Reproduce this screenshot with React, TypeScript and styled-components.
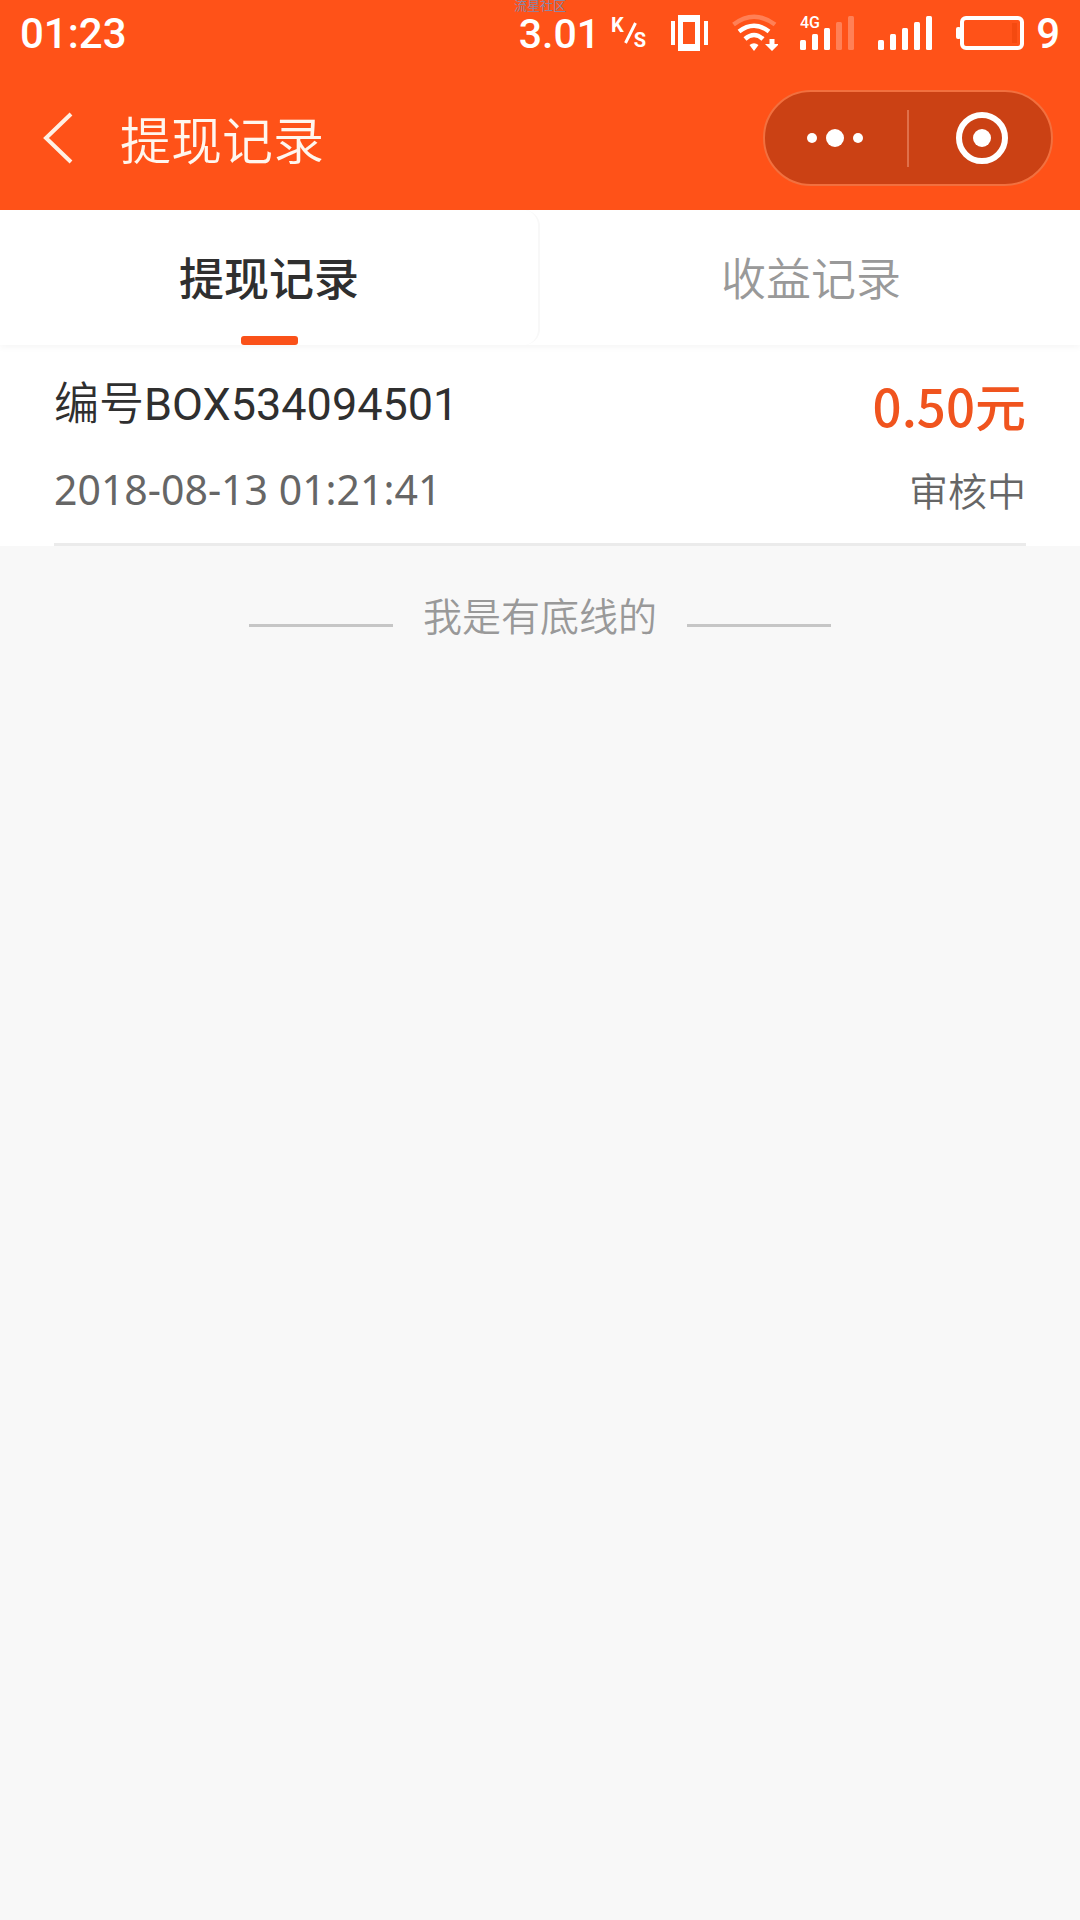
import React from 'react';
import styled, { createGlobalStyle } from 'styled-components';

const cjk = '"Noto Sans CJK SC", sans-serif';

const GlobalStyle = createGlobalStyle`
  *, *::before, *::after { box-sizing: border-box; }
  html, body { margin: 0; background: #f8f8f8; }
  body { font-family: Roboto, "Noto Sans CJK SC", sans-serif; color: #2f2f2f; }
  button { font: inherit; color: inherit; border: 0; padding: 0; background: none; cursor: pointer; }
  svg { display: block; flex: none; }
`;

const Page = styled.div`
  min-height: 100vh;
  background: #f8f8f8;
`;

const TopBar = styled.header`
  position: relative;
  background: #ff5218;
  color: #fff;
`;

const Watermark = styled.span`
  position: absolute;
  top: 0;
  left: 50%;
  transform: translateX(-50%);
  font-size: 13px;
  line-height: 12px;
  color: #8a86a6;
`;

const StatusBar = styled.div`
  display: flex;
  align-items: center;
  justify-content: space-between;
  height: 66px;
  padding: 0 20px;
  font-size: 42px;
  font-weight: 500;
  line-height: 64px;
`;

const Clock = styled.span`
  padding-top: 2px;
`;

const StatusIcons = styled.div`
  display: flex;
  align-items: center;
`;

const Speed = styled.span`
  display: flex;
  align-items: center;
  gap: 11px;
  margin-right: 24px;
  font-size: 41px;
`;

const SpeedUnit = styled.span`
  display: flex;
  align-items: center;
  height: 30px;
  font-size: 20px;
  font-weight: 700;
  line-height: 15px;
`;

const UnitPart = styled.span<{ $low?: boolean }>`
  align-self: ${p => (p.$low ? 'flex-end' : 'flex-start')};
  margin-left: ${p => (p.$low ? '-3px' : '0')};
`;

const IconSlot = styled.span<{ $gap: number }>`
  margin-right: ${p => p.$gap}px;
`;

const NavBar = styled.div`
  display: flex;
  align-items: center;
  height: 144px;
  padding: 0 27px 0 40px;
`;

const BackButton = styled.button`
  display: flex;
  margin-right: 46px;
`;

const Title = styled.h1`
  flex: 1;
  margin: 0;
  font-family: ${cjk};
  font-size: 51px;
  font-weight: 350;
  line-height: 72px;
  color: #fff6ee;
`;

const Capsule = styled.div`
  display: flex;
  align-items: center;
  width: 290px;
  height: 96px;
  border: 2px solid #f2703f;
  border-radius: 48px;
  background: #cb4114;
`;

const CapsuleButton = styled.button`
  display: flex;
  flex: 1;
  align-items: center;
  justify-content: center;
  height: 100%;
`;

const CapsuleDivider = styled.span`
  width: 2px;
  height: 57px;
  background: #e0704a;
`;

const Tabs = styled.nav`
  display: flex;
  height: 135px;
  background: #fff;
  box-shadow: 0 3px 6px #f7f7f7;
  position: relative;
  clip-path: inset(0 0 -12px 0);
`;

const Tab = styled.button<{ $active?: boolean }>`
  display: flex;
  flex: 1;
  flex-direction: column;
  align-items: center;
  justify-content: flex-end;
  margin-right: ${p => (p.$active ? '2px' : '0')};
  border-right: ${p => (p.$active ? '2px solid #f8f8f8' : '0')};
  border-radius: 16px;
  font-family: ${cjk};
  font-size: 45px;
  font-weight: ${p => (p.$active ? 500 : 350)};
  line-height: 66px;
  color: ${p => (p.$active ? '#2f2f2f' : '#999')};

  &::after {
    content: '';
    width: 57px;
    height: 9px;
    margin-top: 26px;
    border-radius: 3px;
    background: ${p => (p.$active ? '#fa5119' : 'transparent')};
  }
`;

const Records = styled.ul`
  margin: 0;
  padding: 0 54px;
  list-style: none;
  background: #fff;
`;

const Record = styled.li`
  display: flex;
  justify-content: space-between;
  height: 201px;
  padding-top: 26px;
  border-bottom: 3px solid #ebebeb;
`;

const Column = styled.div<{ $end?: boolean }>`
  display: flex;
  flex-direction: column;
  gap: 16px;
  align-items: ${p => (p.$end ? 'flex-end' : 'flex-start')};
`;

const RecordId = styled.span`
  font-size: 45px;
  font-weight: 350;
  line-height: 68px;
`;

const RecordCode = styled.span`
  font-weight: 400;
`;

const RecordTime = styled.time`
  font-family: "Noto Sans", "Noto Sans CJK SC", sans-serif;
  font-size: 41px;
  line-height: 68px;
  color: #666;
`;

const Amount = styled.span`
  font-family: ${cjk};
  font-size: 51px;
  font-weight: 500;
  line-height: 68px;
  color: #f0541e;
`;

const Status = styled.span`
  font-family: ${cjk};
  font-size: 39px;
  font-weight: 350;
  line-height: 68px;
  color: #666;
`;

const EndMark = styled.footer`
  display: flex;
  justify-content: center;
  gap: 30px;
  padding-top: 38px;
  font-family: ${cjk};
  font-size: 39px;
  font-weight: 350;
  line-height: 60px;
  color: #999;

  &::before,
  &::after {
    content: '';
    width: 144px;
    height: 3px;
    margin-top: 40px;
    background: #c6c6c6;
  }
`;

const Vibrate = () => (
  <svg width="38" height="36" viewBox="0 0 38 36" aria-hidden="true">
    <path fill="#fff" fillRule="evenodd" d="M8 0h22v36H8zM13 7v22h12V7z" />
    <path fill="#fff" d="M1 6h4v24H1zM34 6h4v24h-4z" />
  </svg>
);

const Wifi = () => (
  <svg width="46" height="38" viewBox="0 0 46 38" fill="none" stroke="#fff" strokeWidth="4.5" aria-hidden="true">
    <path opacity="0.27" d="M1.500 10.500Q22 -5 43 10.500" />
    <path d="M7 17.500Q22 6 37 17.500" />
    <path d="M13 25Q22 17 31 25" />
    <path fill="#fff" stroke="none" d="M17.500 31Q22 27.500 26.500 31L22 37zM37.500 25h5v5h4.500l-7 7-7-7h4.500z" />
  </svg>
);

const SignalBars = ({ level, label }: { level: number; label?: string }) => (
  <svg width="54" height="42" viewBox="0 -4 54 42" fill="#fff" aria-hidden="true">
    {[0, 1, 2, 3, 4].map(i => (
      <rect
        key={i}
        x={i * 12}
        y={24 - i * 6}
        width="6"
        height={10 + i * 6}
        rx="1.5"
        opacity={i < level ? 1 : 0.27}
      />
    ))}
    {label && (
      <text x="0" y="12" fontSize="16" fontWeight="500" fontFamily="Roboto, sans-serif">{label}</text>
    )}
  </svg>
);

const Battery = () => (
  <svg width="68" height="34" viewBox="0 0 68 34" aria-hidden="true">
    <rect x="6" y="2" width="60" height="30" rx="4" fill="none" stroke="#fff" strokeWidth="4" />
    <rect x="0" y="11" width="5" height="12" rx="2" fill="#fff" />
    <rect x="56" y="7" width="5" height="20" fill="#f44a10" />
  </svg>
);

const Slash = () => (
  <svg width="13" height="22" viewBox="0 0 13 22" aria-hidden="true">
    <path d="M1.500 21L11.500 1" stroke="#fff" strokeWidth="3" />
  </svg>
);

export default function App() {
  return (
    <Page>
      <GlobalStyle />
      <TopBar>
        <Watermark>流星社区</Watermark>
        <StatusBar>
          <Clock>01:23</Clock>
          <StatusIcons>
            <Speed>
              <Clock>3.01</Clock>
              <SpeedUnit>
                <UnitPart>K</UnitPart>
                <Slash />
                <UnitPart $low>S</UnitPart>
              </SpeedUnit>
            </Speed>
            <IconSlot $gap={24}><Vibrate /></IconSlot>
            <IconSlot $gap={22}><Wifi /></IconSlot>
            <IconSlot $gap={24}><SignalBars level={3} label="4G" /></IconSlot>
            <IconSlot $gap={24}><SignalBars level={5} /></IconSlot>
            <IconSlot $gap={12}><Battery /></IconSlot>
            <Clock>9</Clock>
          </StatusIcons>
        </StatusBar>
        <NavBar>
          <BackButton type="button" aria-label="返回">
            <svg width="34" height="52" viewBox="0 0 34 52" aria-hidden="true">
              <path d="M31 2L6 26L31 50" fill="none" stroke="#fff0e4" strokeWidth="4" />
            </svg>
          </BackButton>
          <Title>提现记录</Title>
          <Capsule>
            <CapsuleButton type="button" aria-label="更多">
              <svg width="58" height="20" viewBox="0 0 58 20" fill="#fff" aria-hidden="true">
                <circle cx="5" cy="10" r="5" />
                <circle cx="28" cy="10" r="9" />
                <circle cx="51" cy="10" r="5" />
              </svg>
            </CapsuleButton>
            <CapsuleDivider />
            <CapsuleButton type="button" aria-label="关闭">
              <svg width="56" height="52" viewBox="0 0 56 52" aria-hidden="true">
                <circle cx="30" cy="26" r="23" fill="none" stroke="#fff" strokeWidth="6" />
                <circle cx="30" cy="26" r="9" fill="#fff" />
              </svg>
            </CapsuleButton>
          </Capsule>
        </NavBar>
      </TopBar>
      <Tabs>
        <Tab type="button" $active>提现记录</Tab>
        <Tab type="button">收益记录</Tab>
      </Tabs>
      <main>
        <Records>
          <Record>
            <Column>
              <RecordId>编号<RecordCode>BOX534094501</RecordCode></RecordId>
              <RecordTime dateTime="2018-08-13T01:21:41">2018-08-13 01:21:41</RecordTime>
            </Column>
            <Column $end>
              <Amount>0.50元</Amount>
              <Status>审核中</Status>
            </Column>
          </Record>
        </Records>
        <EndMark>我是有底线的</EndMark>
      </main>
    </Page>
  );
}
